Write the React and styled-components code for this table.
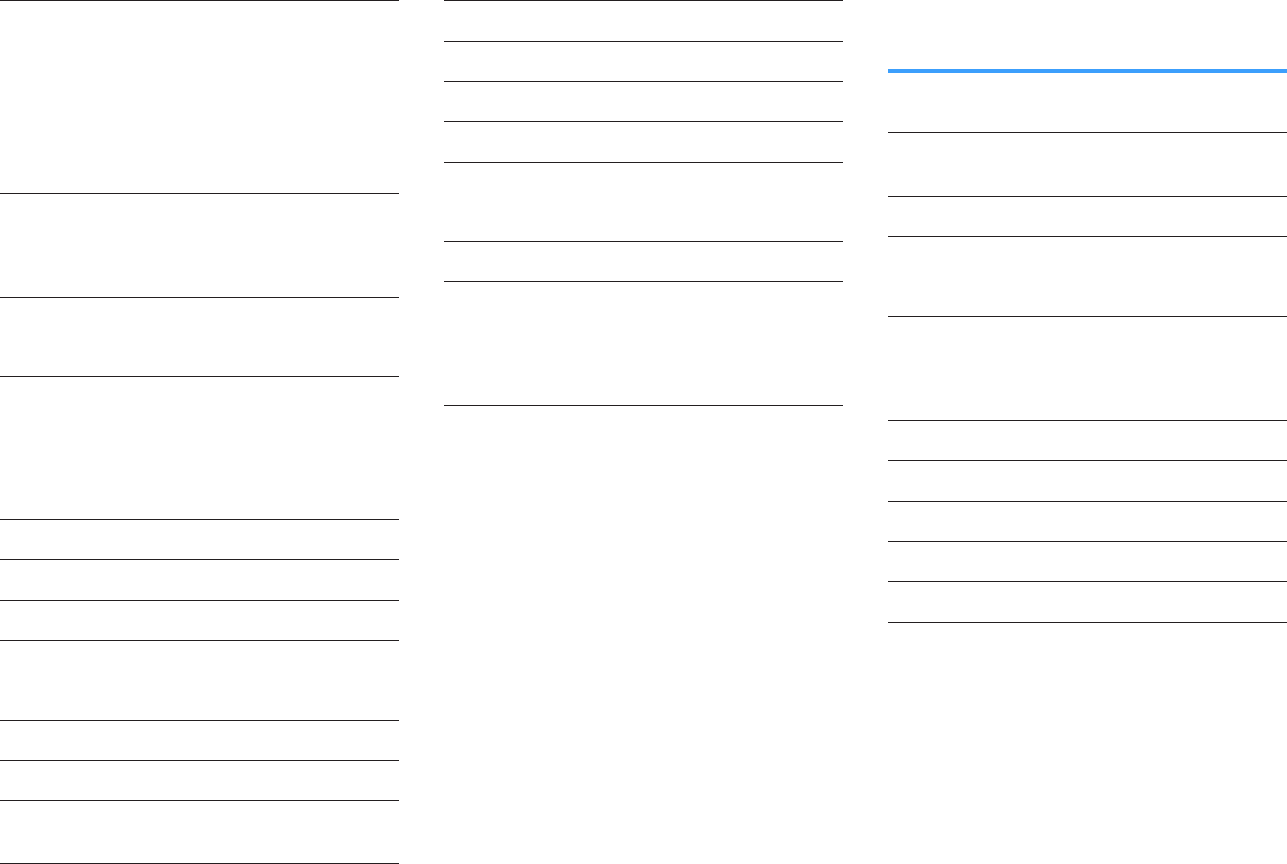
import React from 'react';
import styled, { createGlobalStyle } from 'styled-components';

const GlobalStyle = createGlobalStyle`
  html, body {
    margin: 0;
    padding: 0;
    background: #ffffff;
    font-family: "Liberation Sans", Arial, sans-serif;
  }
`;

const Page = styled.div`
  display: grid;
  grid-template-columns: repeat(3, 399px);
  column-gap: 45px;
  align-items: start;
  width: 1287px;
`;

const Column = styled.div`
  display: flex;
  flex-direction: column;
  padding-top: ${(props) => props.$offset || 0}px;
`;

const Header = styled.div`
  box-sizing: border-box;
  height: ${(props) => props.$h}px;
  border-top: 4px solid #3c9ffc;
`;

const Row = styled.div`
  box-sizing: border-box;
  height: ${(props) => props.$h}px;
  border-top: 1px solid #231f20;
  &:last-child {
    height: ${(props) => props.$h + 1}px;
    border-bottom: 1px solid #231f20;
  }
`;

const left = [193, 104, 79, 143, 40, 41, 40, 80, 40, 40, 63];
const middle = [41, 40, 40, 41, 79, 40, 124];
const right = [64, 40, 80, 104, 40, 41, 40, 40, 41];

const Table = ({ rows }) => rows.map((h, i) => <Row key={i} $h={h} />);

export default function App() {
  return (
    <>
      <GlobalStyle />
      <Page>
        <Column>
          <Table rows={left} />
        </Column>
        <Column>
          <Table rows={middle} />
        </Column>
        <Column $offset={69}>
          <Header $h={63} />
          <Table rows={right} />
        </Column>
      </Page>
    </>
  );
}
